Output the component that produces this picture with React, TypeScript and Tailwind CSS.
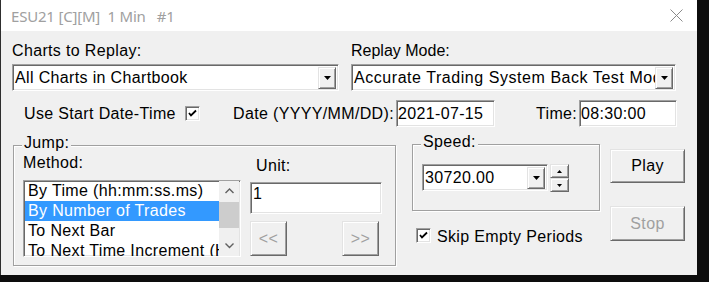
import React from "react";

const sunken =
  "border border-t-[#a0a0a0] border-l-[#a0a0a0] border-b-white border-r-white shadow-[inset_1px_1px_0_#696969,inset_-1px_-1px_0_#e3e3e3] bg-white";
const raised =
  "border border-t-[#e3e3e3] border-l-[#e3e3e3] border-b-[#696969] border-r-[#696969] shadow-[inset_1px_1px_0_#ffffff,inset_-1px_-1px_0_#a0a0a0] bg-[#f0f0f0]";

function Triangle({ up = false, w = 7 }: { up?: boolean; w?: number }) {
  const h = Math.ceil(w / 2);
  return (
    <svg width={w} height={h} viewBox={`0 0 ${w} ${h}`}>
      {up ? (
        <polygon points={`0,${h} ${w},${h} ${w / 2},0`} fill="#000" />
      ) : (
        <polygon points={`0,0 ${w},0 ${w / 2},${h}`} fill="#000" />
      )}
    </svg>
  );
}

function Combo({ text, className }: { text: string; className: string }) {
  return (
    <div className={`${sunken} ${className} flex items-center`}>
      <span className="flex-1 min-w-0 overflow-hidden whitespace-nowrap pl-[2px]">{text}</span>
      <div className={`${raised} w-[18px] h-[22px] mr-[2px] shrink-0 flex items-center justify-center`}>
        <Triangle />
      </div>
    </div>
  );
}

function CheckBox() {
  return (
    <div className={`${sunken} w-[15px] h-[15px] shrink-0 flex items-center justify-center`}>
      <svg width="9" height="9" viewBox="0 0 9 9">
        <polyline points="1,4 3,6.5 8,1.5" fill="none" stroke="#000" strokeWidth="1.8" />
      </svg>
    </div>
  );
}

function Chevron({ down = false }: { down?: boolean }) {
  return (
    <svg width="9" height="6" viewBox="0 0 9 6">
      <polyline
        points={down ? "0.5,0.5 4.5,4.5 8.5,0.5" : "0.5,5 4.5,1 8.5,5"}
        fill="none"
        stroke="#606060"
        strokeWidth="1.4"
      />
    </svg>
  );
}

export default function App() {
  const items = [
    "By Time (hh:mm:ss.ms)",
    "By Number of Trades",
    "To Next Bar",
    "To Next Time Increment (HH:MM:SS)",
  ];

  return (
    <div className="w-[709px] h-[282px] bg-[#0d0d0d] overflow-hidden flex items-start">
      <div className="w-[697px] h-[275px] bg-[#f0f0f0] border-l border-[#2e2e2e] flex flex-col font-['Liberation_Sans',Arial,sans-serif] text-[16px] leading-[18px] tracking-[0.35px] text-black">
        {/* Title bar */}
        <div className="h-[31px] bg-white flex items-center justify-between shrink-0">
          <span className="pl-[10px] whitespace-pre text-[15px] text-[#a0a0a0] font-['Noto_Sans',sans-serif] tracking-[-0.2px]">
            {"ESU21 [C][M]  1 Min   #1"}
          </span>
          <svg width="13" height="13" viewBox="0 0 13 13" className="mr-[14px]">
            <path d="M0.5 0.5 L12.5 12.5 M12.5 0.5 L0.5 12.5" stroke="#8a8a8a" strokeWidth="1" fill="none" />
          </svg>
        </div>

        {/* Top section */}
        <div className="flex pt-[11px] pl-[11px] gap-[12px]">
          <div className="flex flex-col w-[327px]">
            <span>Charts to Replay:</span>
            <Combo text="All Charts in Chartbook" className="mt-[4px] h-[27px] w-[327px]" />
          </div>
          <div className="flex flex-col w-[325px]">
            <span className="tracking-[0px]">Replay Mode:</span>
            <Combo
              text="Accurate Trading System Back Test Mode"
              className="mt-[4px] h-[27px] w-[325px] tracking-[0.55px]"
            />
          </div>
        </div>

        {/* Date row */}
        <div className="flex items-center mt-[9px] h-[27px] pl-[23px]">
          <span className="w-[161px] whitespace-nowrap">Use Start Date-Time</span>
          <CheckBox />
          <span className="ml-[33px] w-[163px] whitespace-nowrap">Date (YYYY/MM/DD):</span>
          <div className={`${sunken} w-[99px] h-[27px] flex items-center pl-[1px]`}>2021-07-15</div>
          <span className="ml-[41px] w-[43px]">Time:</span>
          <div className={`${sunken} w-[98px] h-[27px] flex items-center pl-[1px]`}>08:30:00</div>
        </div>

        {/* Bottom section */}
        <div className="flex items-start mt-[17px] pl-[12px]">
          {/* Jump group */}
          <div className="relative mt-[1px] w-[383px] h-[121px] border border-[#a0a0a0] shadow-[inset_1px_1px_0_#ffffff,1px_1px_0_#ffffff] flex">
            <span className="absolute left-[8px] top-[-12px] px-[2px] bg-[#f0f0f0]">Jump:</span>
            <div className="flex flex-col pl-[9px] pt-[8px]">
              <span>Method:</span>
              <div className={`${sunken} mt-[8px] w-[218px] h-[77px] flex overflow-hidden`}>
                <div className="flex-1 min-w-0 overflow-hidden pl-[1px]">
                  {items.map((it, i) => (
                    <div
                      key={it}
                      className={`h-[20px] leading-[20px] pl-[3px] whitespace-nowrap ${
                        i === 1 ? "bg-[#3399ff] text-white" : ""
                      }`}
                    >
                      {it}
                    </div>
                  ))}
                </div>
                <div className="w-[20px] mr-[1px] shrink-0 bg-[#f0f0f0] flex flex-col">
                  <div className="h-[20px] flex items-center justify-center">
                    <Chevron />
                  </div>
                  <div className="h-[26px] mt-[1px] bg-[#cdcdcd]" />
                  <div className="flex-1" />
                  <div className="h-[20px] flex items-center justify-center">
                    <Chevron down />
                  </div>
                </div>
              </div>
            </div>
            <div className="flex flex-col ml-[9px] pt-[11px]">
              <span className="pl-[6px]">Unit:</span>
              <div className={`${sunken} mt-[7px] w-[132px] h-[32px] pl-[2px] pt-[2px]`}>1</div>
              <div className="flex mt-[7px]">
                <div className={`${raised} w-[37px] h-[35px] flex items-center justify-center text-[#a0a0a0]`}>
                  {"<<"}
                </div>
                <div className={`${raised} ml-[55px] w-[37px] h-[35px] flex items-center justify-center text-[#a0a0a0]`}>
                  {">>"}
                </div>
              </div>
            </div>
          </div>

          {/* Speed column */}
          <div className="flex flex-col ml-[16px] w-[188px]">
            <div className="relative w-[188px] h-[67px] border border-[#a0a0a0] shadow-[inset_1px_1px_0_#ffffff,1px_1px_0_#ffffff] flex items-start pl-[9px] pt-[19px]">
              <span className="absolute left-[8px] top-[-12px] px-[2px] bg-[#f0f0f0]">Speed:</span>
              <Combo text="30720.00" className="w-[126px] h-[27px]" />
              <div className="ml-[2px] w-[19px] h-[28px] flex flex-col">
                <div className={`${raised} h-[14px] flex items-center justify-center`}>
                  <Triangle up w={5} />
                </div>
                <div className={`${raised} h-[14px] flex items-center justify-center`}>
                  <Triangle w={5} />
                </div>
              </div>
            </div>
            <div className="flex items-center mt-[16px] pl-[4px] h-[16px]">
              <CheckBox />
              <span className="ml-[6px] mt-[3px] whitespace-nowrap">Skip Empty Periods</span>
            </div>
          </div>

          {/* Play / Stop */}
          <div className="flex flex-col ml-[10px]">
            <div className={`${raised} mt-[5px] w-[75px] h-[34px] flex items-center justify-center`}>Play</div>
            <div className={`${raised} mt-[23px] w-[75px] h-[35px] flex items-center justify-center text-[#a0a0a0]`}>
              Stop
            </div>
          </div>
        </div>
      </div>
    </div>
  );
}
